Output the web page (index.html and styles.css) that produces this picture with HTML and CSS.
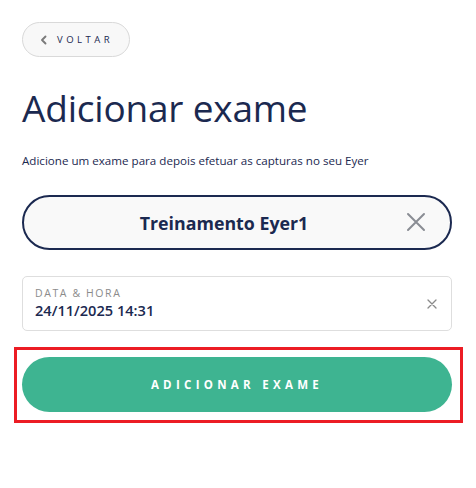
FILE: index.html
```html
<!DOCTYPE html>
<html lang="pt">
<head>
<meta charset="utf-8">
<link rel="stylesheet" href="styles.css">
</head>
<body>
<main class="page">
  <button class="back">
    <svg class="back-icon" viewBox="0 0 10 10" width="10" height="10"><path d="M6.5 1.5 L3 5 L6.5 8.5" fill="none" stroke="#7a7a7a" stroke-width="1.9" stroke-linecap="round" stroke-linejoin="round"/></svg>
    <span>VOLTAR</span>
  </button>
  <h1 class="title">Adicionar exame</h1>
  <p class="subtitle">Adicione um exame para depois efetuar as capturas no seu Eyer</p>
  <div class="patient">
    <span class="patient-name">Treinamento Eyer1</span>
    <svg class="patient-x" viewBox="0 0 20 20" width="20" height="20"><path d="M2 2 L18 18 M18 2 L2 18" stroke="#8a8d94" stroke-width="2" stroke-linecap="round"/></svg>
  </div>
  <div class="date">
    <div class="date-text">
      <span class="date-label">DATA &amp; HORA</span>
      <span class="date-value">24/11/2025 14:31</span>
    </div>
    <svg class="date-x" viewBox="0 0 10 10" width="10" height="10"><path d="M1 1 L9 9 M9 1 L1 9" stroke="#8a8a8a" stroke-width="1.3" stroke-linecap="round"/></svg>
  </div>
  <div class="highlight">
    <button class="submit">ADICIONAR EXAME</button>
  </div>
</main>
</body>
</html>
```

FILE: styles.css
```css
* { box-sizing: border-box; }
html, body { margin: 0; background: #fff; }
body { font-family: "Open Sans", "Noto Sans", sans-serif; color: #1b2950; }
.page { padding: 22px 24px 0 22px; display: flex; flex-direction: column; align-items: stretch; }
.back {
  align-self: flex-start;
  display: flex; align-items: center; gap: 8px;
  height: 35px; width: 108px; padding: 0 0 0 16px;
  border: 1px solid #d9d9d9; border-radius: 18px; background: #f8f8f8;
  font-family: inherit; font-size: 9.5px; letter-spacing: 3.5px; color: #1b2950; font-weight: 500;
}
.title { margin: 28px 0 0; font-size: 37px; font-weight: 400; line-height: 46px; color: #1b2950; letter-spacing: -0.2px; }
.subtitle { margin: 22px 0 0; font-size: 11.6px; line-height: 16px; color: #1b2950; letter-spacing: 0; }
.patient {
  margin-top: 26px; height: 55px; border: 2px solid #1b2950; border-radius: 28px; background: #f9f9f9;
  display: flex; align-items: center; justify-content: center; position: relative;
}
.patient-name { font-size: 17.8px; font-weight: 700; color: #1b2950; margin-left: -26px; }
.patient-x { position: absolute; right: 24px; top: 15px; }
.date {
  margin-top: 26px; height: 55px; border: 1px solid #dedede; border-radius: 5px; background: #fff;
  display: flex; align-items: center; justify-content: space-between; padding: 0 14px 0 12px;
}
.date-text { display: flex; flex-direction: column; }
.date-label { font-size: 10.5px; letter-spacing: 1.6px; color: #8b8b8b; line-height: 14px; margin-top: -2px; }
.date-value { font-size: 14.6px; font-weight: 600; color: #1b2950; line-height: 20px; }
.highlight { margin: 16px -11px 0 -8px; border: 3px solid #ec1c24; padding: 7px 8px 8px 5px; }
.submit {
  display: block; width: 100%; height: 55px; border: 0; border-radius: 28px; background: #3eb491;
  color: #fff; font-family: inherit; font-size: 11.5px; font-weight: 700; letter-spacing: 4.3px;
}
```
